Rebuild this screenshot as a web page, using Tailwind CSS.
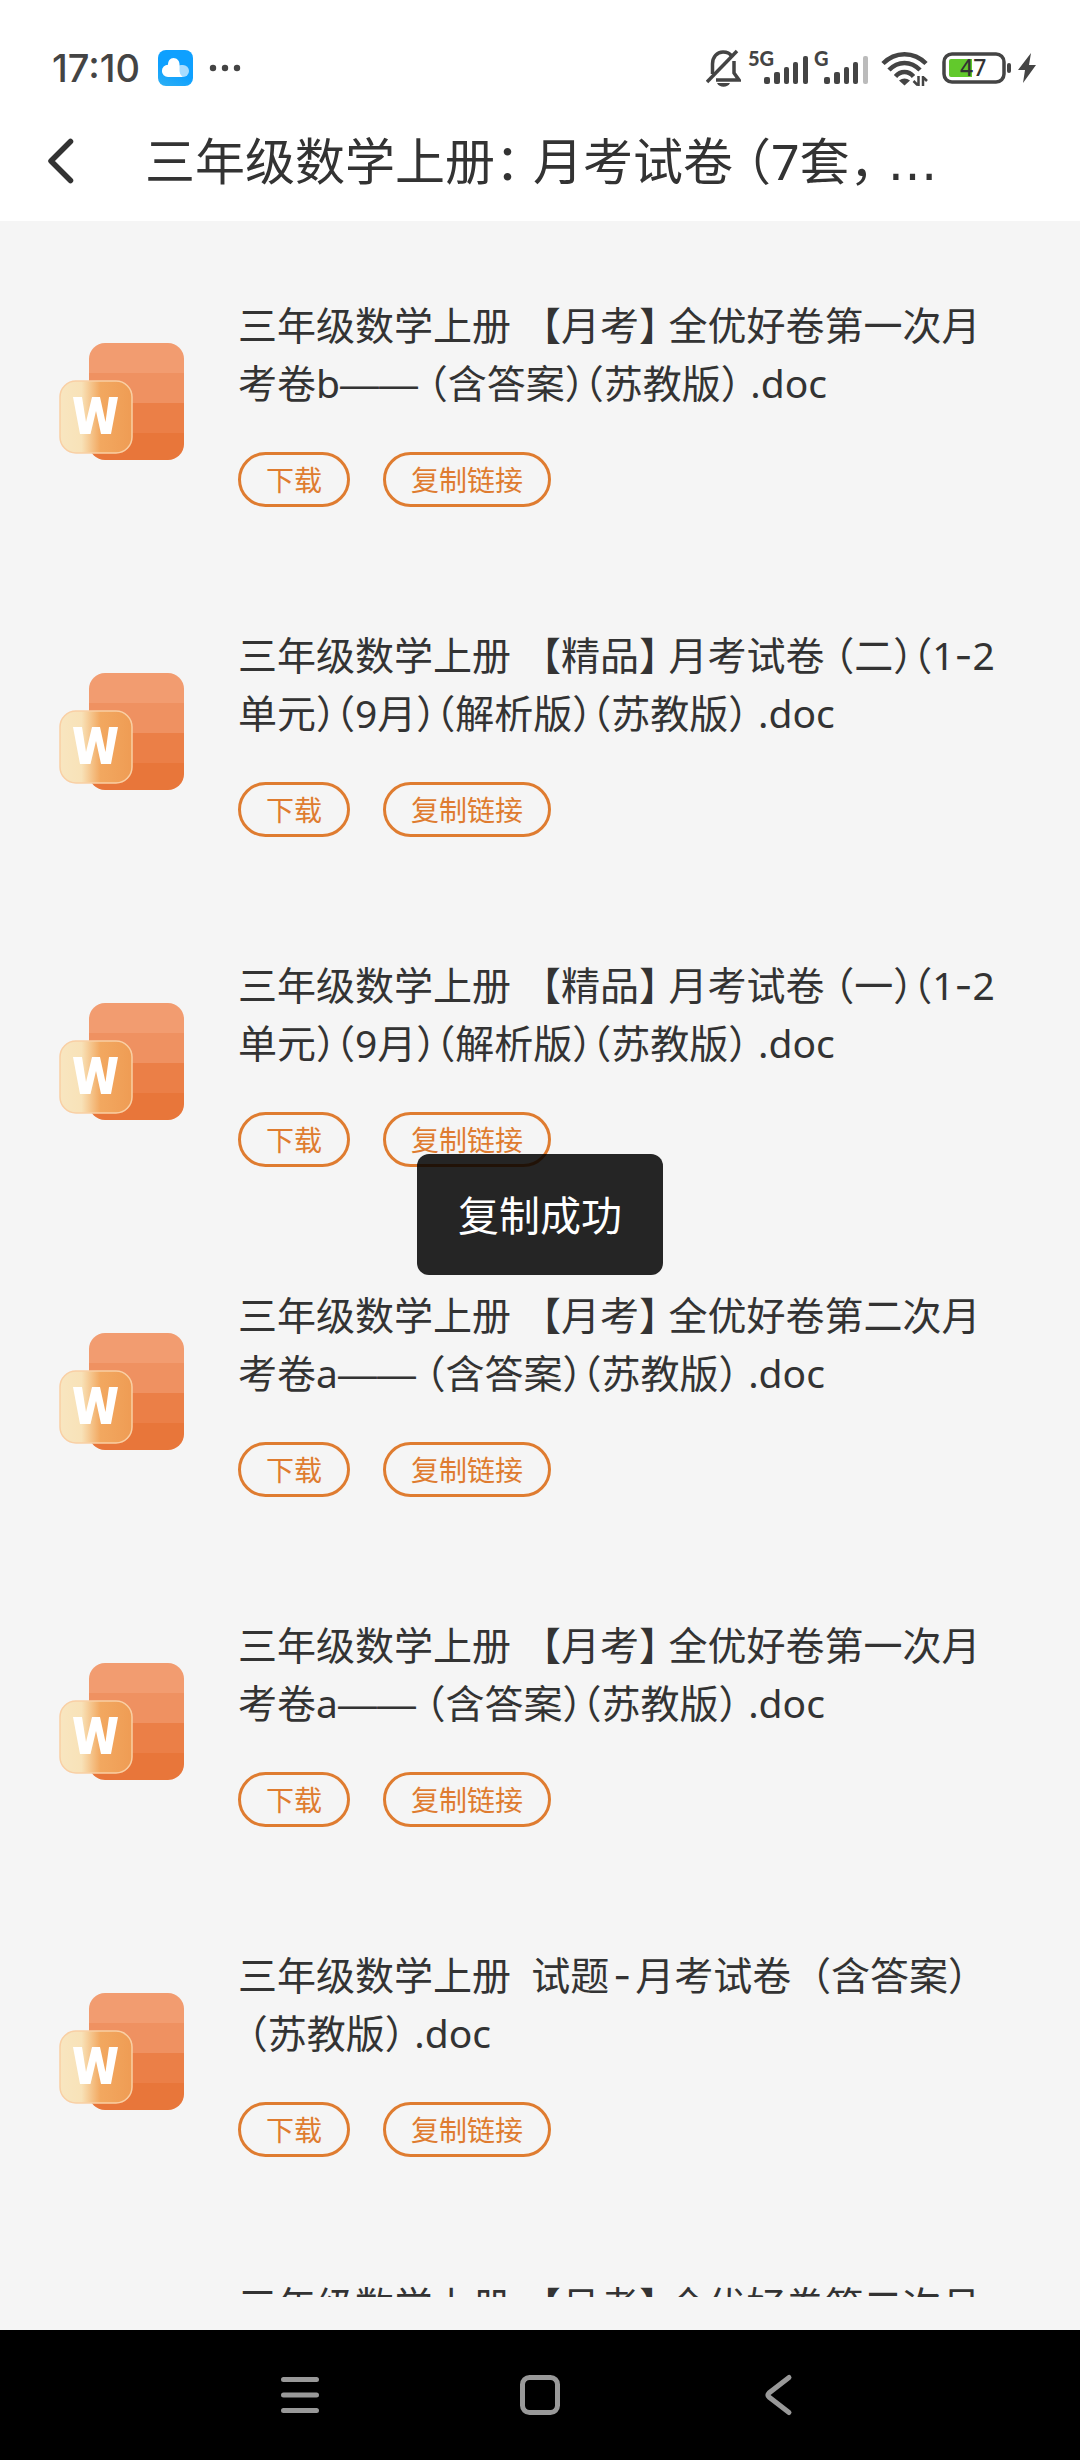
<!DOCTYPE html>
<html lang="zh-CN">
<head>
<meta charset="utf-8">
<meta name="viewport" content="width=device-width, initial-scale=1">
<title>三年级数学上册：月考试卷</title>
<script src="https://cdn.jsdelivr.net/npm/@tailwindcss/browser@4"></script>
</head>
<body class="flex h-screen flex-col overflow-hidden bg-[#f5f5f5] font-['Noto_Sans','Noto_Sans_CJK_SC',sans-serif] text-[#333]">

<svg class="absolute size-0" aria-hidden="true">
  <defs>
    <linearGradient id="badge" x1="0" y1="0" x2="1" y2="0">
      <stop offset="0" stop-color="#f8e6c0"/>
      <stop offset=".3" stop-color="#f8e2b8"/>
      <stop offset=".56" stop-color="#f2a860"/>
      <stop offset="1" stop-color="#ef9c54"/>
    </linearGradient>
    <clipPath id="page"><rect x="30" y="0" width="95" height="117" rx="16"/></clipPath>
  </defs>
  <symbol id="word" viewBox="0 0 126 118">
    <g clip-path="url(#page)">
      <rect x="30" y="0" width="95" height="30" fill="#f29c70"/>
      <rect x="30" y="30" width="95" height="30" fill="#ef9161"/>
      <rect x="30" y="60" width="95" height="30" fill="#eb7f47"/>
      <rect x="30" y="90" width="95" height="28" fill="#e8763a"/>
    </g>
    <rect x="1" y="38" width="72" height="72" rx="16" fill="url(#badge)" stroke="#f9cfa4" stroke-width="1.5"/>
    <path fill="#fff" d="M14 54H23L27 79L33 54H41L46.500 79L50 54H59L52 91H42L37 68L31.500 91H21Z"/>
  </symbol>
</svg>

<div class="flex h-[99px] shrink-0 items-center justify-between bg-white pt-[38px] pr-11 pb-[1px] pl-[52px] text-[#444]">
  <div class="flex items-center">
    <span class="font-['Inter'] text-[38px] leading-[60px] font-medium">17:10</span>
    <svg class="ml-[18px] h-9 w-[35px]" viewBox="0 0 35 36">
      <defs><linearGradient id="sky" x1="0" y1="1" x2=".4" y2="0"><stop offset="0" stop-color="#2fb0f2"/><stop offset=".5" stop-color="#0ea0ff"/></linearGradient></defs>
      <rect width="35" height="36" rx="8" fill="url(#sky)"/>
      <rect x="17" y="15" width="14" height="12" rx="6" fill="#a8dcff"/>
      <path fill="#fff" d="M10 27a6 6 0 0 1 0-12.200C10 11 12 8 15.500 8S21.500 11 21.500 14v7q0 3 3 6Z"/>
    </svg>
    <svg class="ml-4 h-2 w-8" viewBox="0 0 32 8" fill="#444"><circle cx="4" cy="4" r="3.200"/><circle cx="16" cy="4" r="3.200"/><circle cx="28" cy="4" r="3.200"/></svg>
  </div>
  <div class="flex items-center">
    <svg class="h-[38px] w-[35px]" viewBox="0 0 35 38" fill="none" stroke="#444" stroke-width="3.500">
      <path d="M6.500 25V15C6.500 8 11 3 17 3c4 0 7 1.500 8.500 4M28 12v12l5 7H10"/>
      <path d="M1 33L31 2"/>
      <path d="M11 34h13c-2 5-11 5-13 0Z" fill="#444" stroke="none"/>
    </svg>
    <svg class="ml-2 h-9 w-[60px] overflow-visible" viewBox="0 0 60 36" fill="#444">
      <text x="-1" y="16" font-family="Lato" font-weight="900" font-size="20">5G</text>
      <rect x="15" y="27" width="6" height="7" rx="2"/><rect x="25" y="22" width="6" height="12" rx="2"/><rect x="35" y="17" width="5" height="17" rx="2"/><rect x="44" y="12" width="5" height="22" rx="2"/><rect x="54" y="6" width="5" height="28" rx="2"/>
    </svg>
    <svg class="ml-[6px] h-9 w-[54px] overflow-visible" viewBox="0 0 54 36" fill="#444">
      <text x="-1" y="16" font-family="Lato" font-weight="900" font-size="20">G</text>
      <rect x="9" y="27" width="6" height="7" rx="2"/><rect x="19" y="22" width="6" height="12" rx="2"/><rect x="29" y="17" width="5" height="17" rx="2"/><rect x="38" y="12" width="5" height="22" rx="2"/><rect x="48" y="6" width="5" height="28" rx="2" fill="#bbb"/>
    </svg>
    <svg class="ml-3 h-9 w-[47px]" viewBox="0 0 47 36" fill="none" stroke="#444" stroke-width="4.500">
      <path d="M2 13.500C14 1 33 1 45 13.500M8 20c9-9.500 22-9.500 31 0M14.500 26.500c5-6 13-6 18 0"/>
      <path d="M18 30.500q5.500-4 11 0l-5.500 5Z" fill="#444" stroke="none"/>
      <path d="M37.500 26v10m-1-1l-4-4M42 36V26m0 1l4 4" stroke-width="2.500"/>
    </svg>
    <svg class="ml-[14px] h-8 w-[70px]" viewBox="0 0 70 32">
      <rect x="2" y="2" width="60" height="28" rx="8" fill="none" stroke="#444" stroke-width="3.500"/>
      <path d="M9 7H30V25H9a2 2 0 0 1-2-2V9a2 2 0 0 1 2-2Z" fill="#62c92c"/>
      <rect x="65" y="11" width="4" height="10" rx="2" fill="#444"/>
      <text x="18" y="24" font-family="Noto Sans" font-weight="500" font-size="23" fill="#333">47</text>
    </svg>
    <svg class="ml-[6px] h-8 w-[18px]" viewBox="0 0 18 32"><path fill="#444" d="M13 1L0 18h7L5 31 18 13h-7Z"/></svg>
  </div>
</div>

<div class="relative flex min-h-0 flex-1 flex-col">
  <header class="flex h-[122px] shrink-0 items-center bg-white pt-[2px] pr-[120px] pl-[47px]">
    <button type="button" aria-label="返回" class="shrink-0">
      <svg class="h-[46px] w-7" viewBox="0 0 28 46" fill="none" stroke="#333" stroke-width="5.500" stroke-linecap="round" stroke-linejoin="round"><path d="M23.500 3.500L4 23L23.500 42.500"/></svg>
    </button>
    <h1 class="ml-[70px] truncate text-[50px] leading-[72px] [font-feature-settings:'halt']">三年级数学上册：&nbsp;月考试卷&nbsp;（7套，&nbsp;<span class="font-['DejaVu_Sans'] leading-none">…</span></h1>
  </header>

  <main class="mb-[33px] min-h-0 flex-1 overflow-hidden pt-[75px] pr-[70px] pl-[59px]">
    <ul class="flex flex-col gap-[119px]">
      <li class="flex items-center gap-[53px]">
        <svg class="h-[118px] w-[126px] shrink-0" role="img" aria-label="Word"><use href="#word"/></svg>
        <div class="flex-1">
          <p class="text-[39px] leading-[58px] whitespace-pre-wrap [font-feature-settings:'halt']">三年级数学上册   【月考】&nbsp;全优好卷第一次月考卷b<span class="font-['Liberation_Sans'] leading-none">——</span>&nbsp;（含答案）（苏教版） .doc</p>
          <div class="mt-10 flex gap-[33px]">
            <button type="button" class="rounded-full border-3 border-[#df7c30] px-[25px] pt-[2px] text-[28px] leading-[47px] text-[#df7c30]">下载</button>
            <button type="button" class="rounded-full border-3 border-[#df7c30] px-[25px] pt-[2px] text-[28px] leading-[47px] text-[#df7c30]">复制链接</button>
          </div>
        </div>
      </li>
      <li class="flex items-center gap-[53px]">
        <svg class="h-[118px] w-[126px] shrink-0" role="img" aria-label="Word"><use href="#word"/></svg>
        <div class="flex-1">
          <p class="text-[39px] leading-[58px] whitespace-pre-wrap [font-feature-settings:'halt']">三年级数学上册   【精品】&nbsp;月考试卷&nbsp;（二）（1<span class="font-['Inter'] leading-none">-</span>2单元）（9月）（解析版）（苏教版） .doc</p>
          <div class="mt-10 flex gap-[33px]">
            <button type="button" class="rounded-full border-3 border-[#df7c30] px-[25px] pt-[2px] text-[28px] leading-[47px] text-[#df7c30]">下载</button>
            <button type="button" class="rounded-full border-3 border-[#df7c30] px-[25px] pt-[2px] text-[28px] leading-[47px] text-[#df7c30]">复制链接</button>
          </div>
        </div>
      </li>
      <li class="flex items-center gap-[53px]">
        <svg class="h-[118px] w-[126px] shrink-0" role="img" aria-label="Word"><use href="#word"/></svg>
        <div class="flex-1">
          <p class="text-[39px] leading-[58px] whitespace-pre-wrap [font-feature-settings:'halt']">三年级数学上册   【精品】&nbsp;月考试卷&nbsp;（一）（1<span class="font-['Inter'] leading-none">-</span>2单元）（9月）（解析版）（苏教版） .doc</p>
          <div class="mt-10 flex gap-[33px]">
            <button type="button" class="rounded-full border-3 border-[#df7c30] px-[25px] pt-[2px] text-[28px] leading-[47px] text-[#df7c30]">下载</button>
            <button type="button" class="rounded-full border-3 border-[#df7c30] px-[25px] pt-[2px] text-[28px] leading-[47px] text-[#df7c30]">复制链接</button>
          </div>
        </div>
      </li>
      <li class="flex items-center gap-[53px]">
        <svg class="h-[118px] w-[126px] shrink-0" role="img" aria-label="Word"><use href="#word"/></svg>
        <div class="flex-1">
          <p class="text-[39px] leading-[58px] whitespace-pre-wrap [font-feature-settings:'halt']">三年级数学上册   【月考】&nbsp;全优好卷第二次月考卷a<span class="font-['Liberation_Sans'] leading-none">——</span>&nbsp;（含答案）（苏教版） .doc</p>
          <div class="mt-10 flex gap-[33px]">
            <button type="button" class="rounded-full border-3 border-[#df7c30] px-[25px] pt-[2px] text-[28px] leading-[47px] text-[#df7c30]">下载</button>
            <button type="button" class="rounded-full border-3 border-[#df7c30] px-[25px] pt-[2px] text-[28px] leading-[47px] text-[#df7c30]">复制链接</button>
          </div>
        </div>
      </li>
      <li class="flex items-center gap-[53px]">
        <svg class="h-[118px] w-[126px] shrink-0" role="img" aria-label="Word"><use href="#word"/></svg>
        <div class="flex-1">
          <p class="text-[39px] leading-[58px] whitespace-pre-wrap [font-feature-settings:'halt']">三年级数学上册   【月考】&nbsp;全优好卷第一次月考卷a<span class="font-['Liberation_Sans'] leading-none">——</span>&nbsp;（含答案）（苏教版） .doc</p>
          <div class="mt-10 flex gap-[33px]">
            <button type="button" class="rounded-full border-3 border-[#df7c30] px-[25px] pt-[2px] text-[28px] leading-[47px] text-[#df7c30]">下载</button>
            <button type="button" class="rounded-full border-3 border-[#df7c30] px-[25px] pt-[2px] text-[28px] leading-[47px] text-[#df7c30]">复制链接</button>
          </div>
        </div>
      </li>
      <li class="flex items-center gap-[53px]">
        <svg class="h-[118px] w-[126px] shrink-0" role="img" aria-label="Word"><use href="#word"/></svg>
        <div class="flex-1">
          <p class="text-[39px] leading-[58px] whitespace-pre-wrap [font-feature-settings:'halt']">三年级数学上册  试题<span class="px-[4px] font-['Inter'] leading-none">-</span>月考试卷&nbsp;&nbsp;（含答案）<wbr>&nbsp;（苏教版） .doc</p>
          <div class="mt-10 flex gap-[33px]">
            <button type="button" class="rounded-full border-3 border-[#df7c30] px-[25px] pt-[2px] text-[28px] leading-[47px] text-[#df7c30]">下载</button>
            <button type="button" class="rounded-full border-3 border-[#df7c30] px-[25px] pt-[2px] text-[28px] leading-[47px] text-[#df7c30]">复制链接</button>
          </div>
        </div>
      </li>
      <li class="flex items-center gap-[53px]">
        <svg class="h-[118px] w-[126px] shrink-0" role="img" aria-label="Word"><use href="#word"/></svg>
        <div class="flex-1">
          <p class="text-[39px] leading-[58px] whitespace-pre-wrap [font-feature-settings:'halt']">三年级数学上册   【月考】&nbsp;全优好卷第二次月考卷b<span class="font-['Liberation_Sans'] leading-none">——</span>&nbsp;（含答案）（苏教版） .doc</p>
          <div class="mt-10 flex gap-[33px]">
            <button type="button" class="rounded-full border-3 border-[#df7c30] px-[25px] pt-[2px] text-[28px] leading-[47px] text-[#df7c30]">下载</button>
            <button type="button" class="rounded-full border-3 border-[#df7c30] px-[25px] pt-[2px] text-[28px] leading-[47px] text-[#df7c30]">复制链接</button>
          </div>
        </div>
      </li>
    </ul>
  </main>

  <div class="pointer-events-none absolute inset-0 flex items-center justify-center">
    <div role="status" class="rounded-xl bg-black/85 px-[41px] pt-[31px] pb-[29px] text-[41px] leading-[61px] text-white">复制成功</div>
  </div>
</div>

<nav class="flex h-[130px] shrink-0 justify-center bg-black">
  <div class="grid w-2/3 grid-cols-3 place-items-center">
    <button type="button" aria-label="最近任务"><svg class="size-11" viewBox="0 0 44 44" fill="none" stroke="#999" stroke-width="5" stroke-linecap="round"><path d="M5.500 6.500h33M5.500 22h33M5.500 37.500h33"/></svg></button>
    <button type="button" aria-label="主屏幕"><svg class="size-11" viewBox="0 0 44 44" fill="none" stroke="#999" stroke-width="5"><rect x="4.500" y="4.500" width="35" height="35" rx="7"/></svg></button>
    <button type="button" aria-label="返回"><svg class="size-11" viewBox="0 0 44 44" fill="none" stroke="#999" stroke-width="5" stroke-linecap="round"><path d="M31 4.500L11 20q-2 2 0 4L31 39.500"/></svg></button>
  </div>
</nav>
</body>
</html>
